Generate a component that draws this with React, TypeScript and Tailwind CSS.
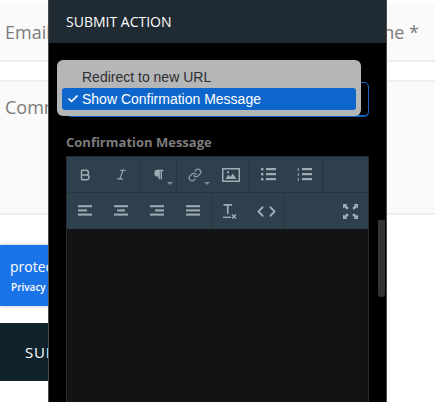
import { Bold, ChevronLeft, ChevronRight, Check, Italic, Link } from "lucide-react";
import { FaParagraph } from "react-icons/fa";

const iconColor = "#a0acb5";

function Bars({ rows }: { rows: [number, number][] }) {
  return (
    <svg width="14" height="13" viewBox="0 0 14 13" fill={iconColor}>
      {rows.map(([x, w], i) => (
        <rect key={i} x={x} y={i * 4.2 + 0.2} width={w} height="2" />
      ))}
    </svg>
  );
}

function ListIcon({ ordered }: { ordered?: boolean }) {
  return (
    <svg width="15" height="13" viewBox="0 0 15 13" fill={iconColor}>
      {[0, 5, 10].map((y) => (
        <g key={y}>
          <rect x={ordered ? 0.8 : 0} y={y} width={ordered ? 1 : 2.4} height={ordered ? 3 : 2.4} />
          <rect x="5" y={y} width="10" height="2.2" />
        </g>
      ))}
    </svg>
  );
}

function ImageIcon() {
  return (
    <svg width="18" height="14" viewBox="0 0 18 14" fill={iconColor}>
      <path d="M0 0h18v14H0zM1.500 1.500v11h15v-11z" fillRule="evenodd" />
      <path d="M3.500 11l3-4.500 2 2.500 2.200-3.500L14.500 11z" />
      <circle cx="6" cy="4.200" r="1.100" />
    </svg>
  );
}

function ClearIcon() {
  return (
    <svg width="14" height="15" viewBox="0 0 14 15" fill={iconColor}>
      <path d="M0.500 0h8.500v1.700H5.600V10H3.900V1.700H0.500z" />
      <rect x="0" y="12.600" width="8" height="1.400" />
      <path d="M9.500 10l1.500 1.500L12.500 10l1 1-1.500 1.500 1.500 1.500-1 1L11 13.500 9.500 15l-1-1L10 12.500 8.500 11z" />
    </svg>
  );
}

function ExpandIcon() {
  return (
    <svg width="15" height="15" viewBox="0 0 15 15" fill={iconColor}>
      <path d="M0 0h4.500L3.200 1.300 5.800 3.900 3.900 5.800 1.300 3.200 0 4.500z" />
      <path d="M15 0v4.500L13.700 3.200 11.100 5.800 9.200 3.900 11.800 1.300 10.500 0z" />
      <path d="M0 15v-4.500L1.300 11.800 3.900 9.200 5.800 11.100 3.200 13.700 4.500 15z" />
      <path d="M15 15h-4.500L11.800 13.700 9.200 11.100 11.100 9.200 13.700 11.800 15 10.500z" />
    </svg>
  );
}

function ToolButton({
  children,
  divider,
  caret,
}: {
  children: React.ReactNode;
  divider?: boolean;
  caret?: boolean;
}) {
  return (
    <div
      className={`relative flex h-full items-center justify-center ${
        divider ? "w-[37px] border-r border-[#263540]" : "w-9"
      }`}
    >
      {children}
      {caret && (
        <span className="absolute right-[3px] bottom-[7px] h-0 w-0 border-x-[3px] border-t-[3px] border-x-transparent border-t-[#7d8a94]" />
      )}
    </div>
  );
}

export default function App() {
  return (
    <div className="relative h-[402px] w-[435px] overflow-hidden bg-white font-['Open_Sans',sans-serif]">
      {/* page behind the modal */}
      <div className="pt-[3px]">
        <div className="flex h-[57px] items-center justify-between bg-[#fafafa] pt-[1px] pr-[16px] pl-[5px] text-[18px] text-[#7b7b7b]">
          <span>Email *</span>
          <span>Phone *</span>
        </div>
        <div className="h-[22px] border-y-2 border-[#efefef]" />
        <div className="h-[133px] border-b-2 border-[#efefef] bg-[#fafafa] pt-[12px] pl-[5px] text-[18px] text-[#7b7b7b]">
          Comments
        </div>
        <div className="mt-[30px] flex h-[61px] w-[200px] flex-col justify-center gap-[5px] bg-[#1a73e8] pl-[10px] text-white shadow-[0_0_4px_rgba(0,0,0,0.25)]">
          <span className="text-[14px] leading-[18px]">protected by reCAPTCHA</span>
          <span className="pl-px text-[10px] leading-[13px] font-semibold">Privacy - Terms</span>
        </div>
        <div className="mt-[17px] flex h-[58px] w-[200px] items-center bg-[#10232c] pt-[1px] pl-[25px] text-[15px] font-medium tracking-[0.8px] text-white">
          SUBMIT
        </div>
      </div>

      {/* modal */}
      <div className="absolute top-0 left-[48px] flex h-[402px] w-[339px] flex-col border-x border-[#4a4a4a] bg-black">
        <div className="flex h-[43px] items-center bg-[#1f2a33] pl-[17px] text-[14px] text-white">
          SUBMIT ACTION
        </div>

        <div className="relative mt-[39px] ml-[17px] h-[35px] w-[303px] rounded-[5px] border border-b-2 border-[#1565c0]">
          <div className="absolute top-[-23px] left-[-10px] flex h-[56px] w-[304px] flex-col rounded-[6px] bg-[#b5b6b8] p-[5px] pt-[6px] font-['Liberation_Sans',sans-serif] text-[14px]">
            <div className="flex h-[22px] items-center pl-[20px] text-[#2f2f2f]">Redirect to new URL</div>
            <div className="flex h-[22px] items-center rounded-[3px] bg-[#0e66cc] pl-[5px] text-white">
              <span className="flex w-[15px]">
                <Check size={12} strokeWidth={3.5} />
              </span>
              Show Confirmation Message
            </div>
          </div>
        </div>

        <div className="mt-[16px] ml-[17px] text-[13px] leading-[18px] font-bold text-[#7c7c7c]">
          Confirmation Message
        </div>

        <div className="mt-[5px] ml-[17px] flex w-[303px] flex-1 flex-col border-x border-t border-[#262b2f] bg-[#121314]">
          <div className="flex h-[36px] border-b border-[#263540] bg-[#2f404d]">
            <ToolButton><Bold size={14} color={iconColor} strokeWidth={2.5} /></ToolButton>
            <ToolButton divider><Italic size={13} color={iconColor} strokeWidth={2} /></ToolButton>
            <ToolButton divider caret><FaParagraph size={11} color={iconColor} /></ToolButton>
            <ToolButton caret><Link size={14} color={iconColor} strokeWidth={1.8} /></ToolButton>
            <ToolButton divider><ImageIcon /></ToolButton>
            <ToolButton><ListIcon /></ToolButton>
            <ToolButton divider><ListIcon ordered /></ToolButton>
          </div>
          <div className="flex h-[36px] justify-between bg-[#2f404d]">
            <div className="flex h-full">
              <ToolButton><Bars rows={[[0, 14], [0, 9], [0, 14]]} /></ToolButton>
              <ToolButton><Bars rows={[[0, 14], [3, 8], [0, 14]]} /></ToolButton>
              <ToolButton><Bars rows={[[0, 14], [5, 9], [0, 14]]} /></ToolButton>
              <ToolButton divider><Bars rows={[[0, 14], [0, 14], [0, 14]]} /></ToolButton>
              <ToolButton><ClearIcon /></ToolButton>
              <ToolButton divider>
                <span className="flex items-center -space-x-[5px]">
                  <ChevronLeft size={17} color={iconColor} strokeWidth={2.5} />
                  <ChevronRight size={17} color={iconColor} strokeWidth={2.5} />
                </span>
              </ToolButton>
            </div>
            <ToolButton><ExpandIcon /></ToolButton>
          </div>
        </div>

        {/* scrollbar */}
        <div className="absolute top-[220px] right-[1px] h-[77px] w-[7px] rounded-b-[4px] bg-[#333333]" />
      </div>
    </div>
  );
}
